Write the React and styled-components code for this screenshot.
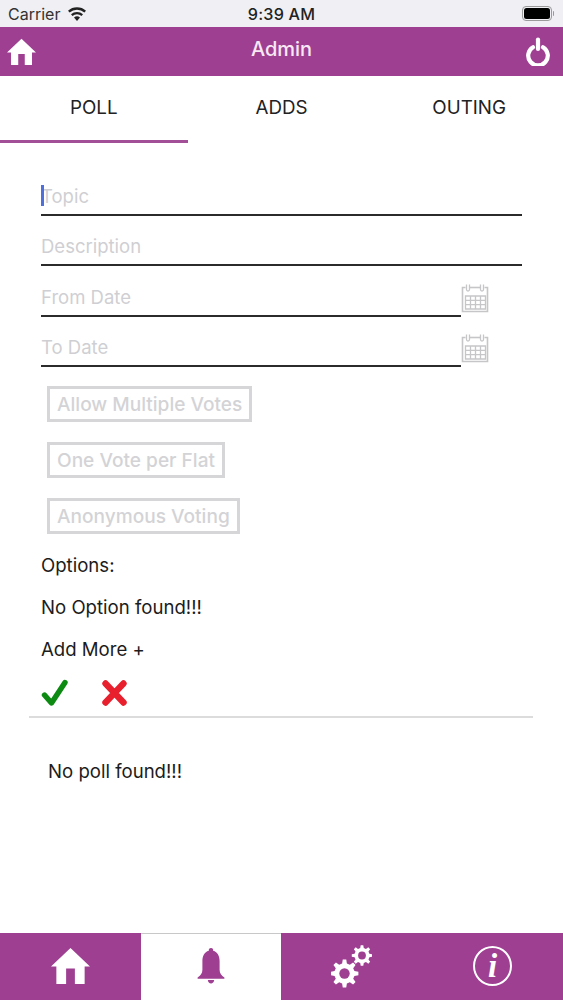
import React from "react";
import styled, { createGlobalStyle } from "styled-components";

const Global = createGlobalStyle`
  html, body { margin: 0; padding: 0; background: #fff; }
  body { font-family: Inter, "Liberation Sans", sans-serif; -webkit-font-smoothing: antialiased; }
  * { box-sizing: border-box; }
`;
const Screen = styled.div`
  width: 563px; height: 1000px; display: flex; flex-direction: column; overflow: hidden; background: #fff; color: #1c1c1c;
`;
const StatusBar = styled.div`
  height: 27px; flex: none; background: #efeff4; display: grid; grid-template-columns: 1fr auto 1fr; align-items: center; padding: 0 8px 0 8px; color: #222;
`;
const Carrier = styled.div`display: flex; align-items: center; gap: 8px; font-size: 16px; color: #333;`;
const Clock = styled.div`font-weight: 500; font-size: 16.2px; letter-spacing: .2px;`;
const BatteryWrap = styled.div`justify-self: end; display: flex; align-items: center; gap: 1px; margin-right: 1px;`;
const BatteryBody = styled.div`width: 30px; height: 15px; border: 1px solid #9a9a9a; border-radius: 4px; padding: 1px;`;
const BatteryFill = styled.div`width: 100%; height: 100%; background: #000; border-radius: 2.5px;`;
const BatteryCap = styled.div`width: 1.5px; height: 5px; background: #999; border-radius: 0 1px 1px 0;`;
const Header = styled.header`
  height: 49px; flex: none; background: #9f3f92; display: flex; align-items: center; justify-content: space-between; padding: 0 13px 0 7px; position: relative; color: #fff;
`;
const Title = styled.div`
  position: absolute; left: 0; right: 0; text-align: center; font-size: 20px; font-weight: 500; color: #f6e9f4; pointer-events: none; top: 10px;
`;
const Tabs = styled.nav`display: grid; grid-template-columns: repeat(3, 1fr); height: 67px; flex: none;`;
const Tab = styled.div`
  display: flex; align-items: center; justify-content: center; padding-bottom: 1px; font-size: 18.8px; color: #222; border-bottom: 3px solid ${p => (p.$active ? "#a34f98" : "transparent")};
`;
const Form = styled.section`padding: 29px 41px 0 41px; display: flex; flex-direction: column;`;
const FieldRow = styled.div`display: flex; align-items: flex-start; height: 50.33px;`;
const Field = styled.div`
  flex: 1; height: 44px; border-bottom: 2px solid #2b2b2b; display: flex; align-items: center; padding-top: 6px; font-size: 18.5px; color: #cfcfd3; position: relative;
`;
const Caret = styled.span`position: absolute; left: 0; top: 13px; width: 2.5px; height: 21px; background: #4f6fdc;`;
const CalIcon = styled.svg`width: 28px; height: 29px; flex: none; margin: 11px 33px 0 0; display: block;`;
const Toggles = styled.div`display: flex; flex-direction: column; align-items: flex-start; gap: 20px; padding: 13px 0 0 6px;`;
const Toggle = styled.div`
  height: 36px; border: 3px solid #d6d6d8; display: flex; align-items: center; padding: 0 7px; font-size: 19.1px; font-weight: 500; color: #d3d3d6;
`;
const Line = styled.div`height: 42px; display: flex; align-items: center; font-size: 18.6px; color: #1c1c1c;`;
const Lines = styled.div`display: flex; flex-direction: column; padding-top: 10px;`;
const Actions = styled.div`display: flex; align-items: center; gap: 32px; height: 46px;`;
const Divider = styled.hr`margin: 0 30px 0 29px; border: none; border-top: 2px solid #dcdcdc; height: 0;`;
const Empty = styled.div`padding: 42px 0 0 48px; font-size: 18.6px; color: #1c1c1c; flex: 1;`;
const BottomBar = styled.footer`display: grid; grid-template-columns: 141px 140px 141px 141px; height: 67px; flex: none; background: #9f3f92;`;
const BarItem = styled.div`
  display: flex; align-items: center; justify-content: center; background: ${p => (p.$active ? "#fff" : "transparent")}; border-top: 1px solid ${p => (p.$active ? "#c8c8c8" : "#9f3f92")}; padding-bottom: 2px;
`;
const InfoCircle = styled.span`
  width: 39px; height: 40px; border: 2.4px solid #fff; border-radius: 50%; display: flex; align-items: center; justify-content: center; color: #fff; font: italic 700 33px "Liberation Serif", serif; line-height: 1;
`;

const HomeIcon = ({ size = 30, color = "#fff" }) => (
  <svg width={size} height={size * 0.95} viewBox="0 0 40 38" fill={color}>
    <path d="M20 1 L40 20 L34.5 20 L34.5 38 L24.5 38 L24.5 22 L15.5 22 L15.5 38 L5.5 38 L5.5 20 L0 20 Z" />
  </svg>
);
const gearPath = (cx, cy, R, r, n, rot = 0) => {
  let d = "";
  const step = (Math.PI * 2) / n;
  for (let i = 0; i < n; i++) {
    const a = i * step - Math.PI / 2 + rot;
    const w = step * 0.2;
    const pts = [
      [r, a - w * 1.5], [R, a - w * 0.8], [R, a + w * 0.8], [r, a + w * 1.5],
    ];
    pts.forEach(([rad, t], j) => {
      d += `${i === 0 && j === 0 ? "M" : "L"}${(cx + rad * Math.cos(t)).toFixed(2)} ${(cy + rad * Math.sin(t)).toFixed(2)} `;
    });
  }
  return d + "Z";
};
const GearsIcon = () => (
  <svg width="41" height="43" viewBox="0 0 41 43">
    <path d={gearPath(13.5, 28.5, 14, 10.2, 8)} fill="#fff" />
    <circle cx="13.5" cy="28.5" r="5.2" fill="#9f3f92" />
    <path d={gearPath(31, 10.5, 10.3, 7.6, 8)} fill="#fff" />
    <circle cx="31" cy="10.5" r="3.9" fill="#9f3f92" />
  </svg>
);
const BellIcon = () => (
  <svg width="28" height="36" viewBox="0 0 28 33" preserveAspectRatio="none" fill="#9f3f92">
    <path d="M14 0 C15.6 0 16.4 1.2 16.2 2.6 C20.6 3.8 22.6 7.6 22.6 12 L22.6 20 C22.6 23.5 24.5 25.4 27.4 27 L27.4 28.2 L0.6 28.2 L0.6 27 C3.5 25.4 5.4 23.5 5.4 20 L5.4 12 C5.4 7.6 7.4 3.8 11.8 2.6 C11.6 1.2 12.4 0 14 0 Z" />
    <path d="M10.8 29.4 L17.2 29.4 C17 31.4 15.6 32.6 14 32.6 C12.4 32.6 11 31.4 10.8 29.4 Z" />
  </svg>
);
const PowerIcon = () => (
  <svg width="24" height="29" viewBox="0 0 24 29" fill="none" stroke="#fff" strokeLinecap="round">
    <path d="M7 10.2 A9.8 9.8 0 1 0 17 10.2" strokeWidth="4.2" />
    <path d="M12 2.5 L12 12" strokeWidth="4.2" />
  </svg>
);
const WifiIcon = () => (
  <svg width="18" height="14" viewBox="0 0 18 14" fill="#222">
    <path d="M9 14 L6 10.6 A4.5 4.5 0 0 1 12 10.6 Z" />
    <path d="M4.5 8.9 L3 7.2 A9 9 0 0 1 15 7.2 L13.5 8.9 A6.8 6.8 0 0 0 4.5 8.9 Z" />
    <path d="M1.6 5.6 L0 3.8 A13.5 13.5 0 0 1 18 3.8 L16.4 5.6 A11.2 11.2 0 0 0 1.6 5.6 Z" />
  </svg>
);
const CalendarIcon = () => (
  <CalIcon viewBox="0 0 28 29" fill="none" stroke="#c6c6c9" strokeWidth="1.3">
    <path d="M4.5 3.5 H1.5 V27.5 H26.5 V3.5 H23.5" strokeWidth="1.6" />
    <path d="M9 3.5 H19" strokeWidth="1.6" />
    <path d="M5.5 0.5 V5.5 a1.5 1.5 0 0 0 3 0 V0.5 M19.5 0.5 V5.5 a1.5 1.5 0 0 0 3 0 V0.5" />
    <path d="M4.5 12 H24.5 V25 H4.5 Z M4.5 16.3 H24.5 M4.5 20.6 H24.5 M9.5 12 V25 M14.5 12 V25 M19.5 12 V25" />
  </CalIcon>
);
const CheckIcon = () => (
  <svg width="28" height="28" viewBox="0 0 28 28" fill="none" stroke="#0d8a12" strokeWidth="5.4" strokeLinecap="round" strokeLinejoin="round">
    <path d="M3.5 16 L10.5 24 L24 3.5" />
  </svg>
);
const CrossIcon = () => (
  <svg width="28" height="28" viewBox="0 0 28 28" fill="none" stroke="#e8202e" strokeWidth="6.4" strokeLinecap="round">
    <path d="M4.5 4.5 L22.5 23.5 M22.5 4.5 L4.5 23.5" />
  </svg>
);

export default function App() {
  return (
    <Screen>
      <Global />
      <StatusBar>
        <Carrier>Carrier <WifiIcon /></Carrier>
        <Clock>9:39 AM</Clock>
        <BatteryWrap><BatteryBody><BatteryFill /></BatteryBody><BatteryCap /></BatteryWrap>
      </StatusBar>
      <Header>
        <HomeIcon size={29} />
        <Title>Admin</Title>
        <PowerIcon />
      </Header>
      <Tabs>
        <Tab $active>POLL</Tab>
        <Tab>ADDS</Tab>
        <Tab>OUTING</Tab>
      </Tabs>
      <Form>
        <FieldRow><Field><Caret />Topic</Field></FieldRow>
        <FieldRow><Field>Description</Field></FieldRow>
        <FieldRow><Field>From Date</Field><CalendarIcon /></FieldRow>
        <FieldRow><Field>To Date</Field><CalendarIcon /></FieldRow>
        <Toggles>
          <Toggle>Allow Multiple Votes</Toggle>
          <Toggle>One Vote per Flat</Toggle>
          <Toggle>Anonymous Voting</Toggle>
        </Toggles>
        <Lines>
          <Line>Options:</Line>
          <Line>No Option found!!!</Line>
          <Line>Add More +</Line>
        </Lines>
        <Actions><CheckIcon /><CrossIcon /></Actions>
      </Form>
      <Divider />
      <Empty>No poll found!!!</Empty>
      <BottomBar>
        <BarItem><HomeIcon size={39} /></BarItem>
        <BarItem $active><BellIcon /></BarItem>
        <BarItem><GearsIcon /></BarItem>
        <BarItem><InfoCircle>i</InfoCircle></BarItem>
      </BottomBar>
    </Screen>
  );
}
